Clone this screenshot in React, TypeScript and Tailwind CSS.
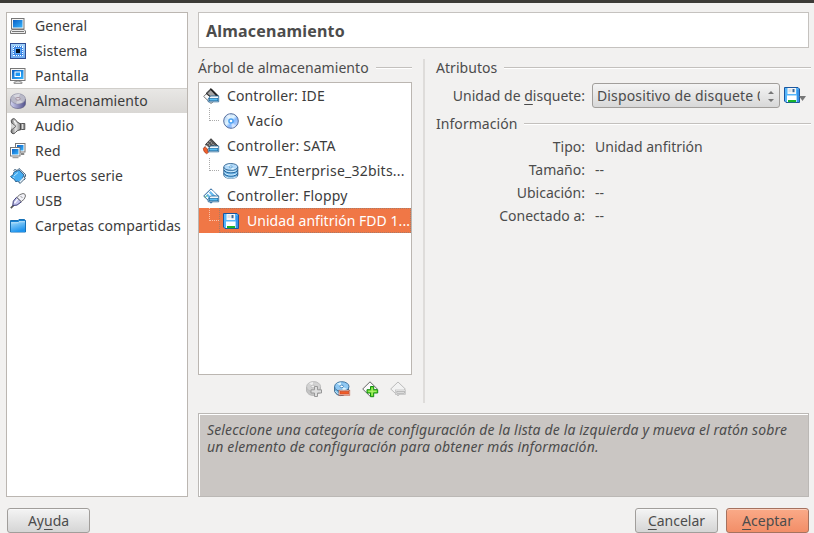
import React from "react";

type IconProps = { className?: string };

const Svg = ({ children, className = "" }: { children: React.ReactNode; className?: string }) => (
  <svg viewBox="0 0 16 16" className={`h-4 w-4 shrink-0 overflow-visible ${className}`}>{children}</svg>
);

const Gradients = () => (
  <svg className="absolute h-0 w-0">
    <defs>
      <linearGradient id="blue" x1="0" y1="0" x2="1" y2="1"><stop stopColor="#0a5fc4" /><stop offset="1" stopColor="#35b4ff" /></linearGradient>
      <linearGradient id="chip" x1="0" y1="0" x2="0" y2="1"><stop stopColor="#a3d3fb" /><stop offset="1" stopColor="#6aa7ee" /></linearGradient>
      <linearGradient id="folder" x1="0" y1="0" x2="0.4" y2="1"><stop stopColor="#a4dcfa" /><stop offset="1" stopColor="#1e94ee" /></linearGradient>
      <linearGradient id="metal" x1="0" y1="0" x2="1" y2="0"><stop stopColor="#d4d6f2" /><stop offset=".4" stopColor="#9c9cc8" /><stop offset="1" stopColor="#52528c" /></linearGradient>
      <linearGradient id="gray" x1="0" y1="0" x2="1" y2="0"><stop stopColor="#6e6e6e" /><stop offset=".5" stopColor="#e4e4e4" /><stop offset="1" stopColor="#8a8a8a" /></linearGradient>
      <linearGradient id="cd" x1="0" y1="0" x2="1" y2="1"><stop stopColor="#a9c8f2" /><stop offset="0.45" stopColor="#e2f6ff" /><stop offset="0.6" stopColor="#86b9ff" /><stop offset="1" stopColor="#d9e4fa" /></linearGradient>
    </defs>
  </svg>
);

const GeneralIcon = () => <Svg>
  <rect x="1.5" y="0.5" width="12.5" height="10.5" fill="#f4f4f4" stroke="#777" />
  <rect x="3" y="2" width="9.5" height="7.5" fill="url(#blue)" />
  <path d="M2 11.5h12l1.5 1.5v2.5H.5V13z" fill="#ececec" stroke="#777" /><path d="M2 13.5h12" stroke="#777" />
</Svg>;
const SystemIcon = () => <Svg>
  <rect x=".5" y=".5" width="15" height="15" fill="url(#chip)" stroke="#2c4c94" />
  <rect x="3" y="3" width="10" height="10" fill="#3c86e6" />
  <path d="M4 3.5h9M4 12.5h9M3.5 4v9M12.5 4v9" stroke="#fff" strokeDasharray="1 1" />
  <rect x="5" y="5" width="6" height="6" fill="#5ba6f4" /><rect x="6" y="6" width="4" height="4" fill="#07101e" />
</Svg>;
const DisplayIcon = () => <Svg>
  <rect x=".5" y=".5" width="14.5" height="12" fill="#f7f7f7" stroke="#777" />
  <rect x="2" y="2" width="11.5" height="9" fill="url(#blue)" />
  <rect x="5" y="4" width="5.5" height="4.5" fill="#1996f5" stroke="#fff" />
  <path d="M6 13h4v1h2v1.5H4V14h2z" fill="#ddd" stroke="#777" strokeWidth=".7" />
</Svg>;
const DiskIcon = () => <Svg>
  <path d="M.5 6v4.5c0 3 3.4 5 7.5 5s7.5-2 7.5-5V6" fill="url(#metal)" stroke="#5a5a7c" strokeWidth=".6" />
  <ellipse cx="8" cy="5.8" rx="7.4" ry="5.1" fill="#b9b9c8" stroke="#85859c" strokeWidth=".6" />
  <path d="M8 6L3 2.8Q6 .5 10 1z" fill="#d6d6de" /><path d="M8 6l5 3q-3 2-7 1.6z" fill="#d2d2da" />
  <ellipse cx="8" cy="5.8" rx="2.2" ry="1.4" fill="#dcd6de" stroke="#96808f" strokeWidth=".7" />
</Svg>;
const AudioIcon = () => <Svg>
  <path d="M9.5 5.8l2-.3h3.3v6h-3.5l-1.8.5z" fill="#9a9a9a" stroke="#4a4a4a" strokeWidth=".9" />
  <path d="M2 1.3q2-1.6 3.5.3.6 2.4 5 4.3v5.6q-4 1-5 3-1.5 2-3.5.8-1.5-1.2-.7-3Q3.5 8 1.4 4q-.5-2 .6-2.7z" fill="url(#gray)" stroke="#444" strokeWidth=".9" />
  <path d="M1.2 4.5L6 8.3 1.4 12" fill="#d7d7d7" stroke="#555" strokeWidth=".8" />
  <path d="M4 2.5q.5 2 2.5 3.5" stroke="#fff" fill="none" /><path d="M12.5 6v5" stroke="#ddd" />
</Svg>;
const NetworkIcon = () => <Svg>
  <rect x="5.5" y=".5" width="9.5" height="8.5" fill="#fff" stroke="#777" /><rect x="7" y="2" width="6.5" height="5.5" fill="url(#blue)" />
  <path d="M11 10.5h3v1h-3" stroke="#888" fill="none" />
  <rect x=".5" y="4.5" width="9.5" height="8.5" fill="#fff" stroke="#777" /><rect x="2" y="6" width="6.5" height="5.5" fill="url(#blue)" />
  <path d="M2.5 14.7h6" stroke="#888" fill="none" />
</Svg>;
const SerialIcon = () => <Svg>
  <path d="M3.5 2.5l1.5-1 2 1 2-2 6.5 6v2L14 9l1 2-1 1" fill="#d9eafb" stroke="#31526e" strokeWidth=".9" />
  <path d="M.5 8.5L3 7l1-3 3-1 2-1 5 5-1 2-1 3-3 2-2-1-1 1-2-3-2-1z" fill="#45adf2" stroke="#285d8b" strokeWidth=".9" />
  <path d="M4 8l4-3.5M3 9l1.5 1" stroke="#b1e5ff" /><path d="M9 14l1 1.5 5-5-.8-2" fill="#e8f3fc" stroke="#36566e" strokeWidth=".9" />
</Svg>;
const UsbIcon = () => <Svg>
  <path d="M.8 15.2l3-3" stroke="#555" strokeWidth="1.7" />
  <path d="M2.8 12.5Q2 8 6.5 4.3l5 4.4Q7 13.5 2.8 12.5z" fill="#c4c4ed" stroke="#3e3e77" />
  <path d="M7 4.5q2-3.5 6-4 2.5 0 2.5 2.5-.5 3.5-4.2 5.6z" fill="#f2f2f8" stroke="#777" /><path d="M10.5 3l2 2" stroke="#999" /><path d="M4.5 10.2l3.2-4" stroke="#fff" strokeWidth="1.2" />
</Svg>;
const FolderIcon = () => <Svg>
  <path d="M.5 2.5H8l1-1h5.5l1 1v11.5H.5z" fill="#1683d4" stroke="#1871b5" /><path d="M1 4.5h7l1-1h6V14H1z" fill="url(#folder)" /><path d="M1 4.7h7l1-1h6" stroke="#d8f2ff" strokeWidth=".8" fill="none" />
</Svg>;
const CdIcon = () => <Svg>
  <circle cx="8" cy="8" r="7.3" fill="url(#cd)" stroke="#536c9c" /><path d="M8 8L3 3l4-2zM8 8l5 5-4 2z" fill="#fff" opacity=".5" />
  <circle cx="8" cy="8" r="2.8" fill="#4aa0f0" /><circle cx="8" cy="8" r="1.3" fill="#fff" />
</Svg>;
const DatabaseIcon = () => <Svg>
  <path d="M.8 4v8c0 4.6 14 4.6 14 0V4" fill="#72b9ea" stroke="#2b5a85" strokeWidth=".9" />
  <path d="M1 7c1 3.8 12.7 3.8 13.7 0M1 10.3c1 3.8 12.7 3.8 13.7 0" fill="none" stroke="#235f95" />
  <path d="M1.6 6.2c1 3 10 3.4 12 .8M1.6 9.5c1 3 10 3.4 12 .8M1.6 12.6c1 3 10 3.4 12 .8" fill="none" stroke="#d8f1ff" />
  <ellipse cx="7.8" cy="3.9" rx="7" ry="3.4" fill="#b2dafa" stroke="#356591" strokeWidth=".9" /><path d="M7.8 4L3 2.3l4-1zM8 4l4.5 2-4 .8z" fill="#e4f6ff" /><ellipse cx="7.8" cy="3.9" rx="1.7" ry=".9" fill="#fff" stroke="#3b8cc9" strokeWidth=".7" />
</Svg>;
const ControllerIcon = ({ kind }: { kind: "ide" | "sata" | "floppy" }) => <Svg>
  {kind === "ide" && <>
    <path d="M.7 8.5L4 5l7.5 7.5L8 15.5z" fill="#fbfbfb" stroke="#555" strokeWidth=".8" />
    <path d="M3 5.5L8 .6l7.2 7.2-4 4.2z" fill="#4d4d4d" stroke="#222" strokeWidth=".8" />
    <path d="M4.6 5.4L8 2l4.5 5.5-3 2z" fill="#a5a5a5" /><path d="M7.5 1l7 7" stroke="#222" strokeWidth="1.4" />
  </>}
  {kind === "sata" && <>
    <path d="M2.5 6.5L8 .7l7 7.3-4 4z" fill="#555" stroke="#222" strokeWidth=".8" />
    <path d="M4.5 5l6 6M6.5 3l6 6" stroke="#bbb" strokeWidth="1.1" strokeDasharray="1.2 1" />
    <path d="M1 9.5L3.5 7 9 12l-3 1z" fill="#fff" stroke="#555" strokeWidth=".7" />
    <path d="M.2 10.5l2-1.5 2.6 2.3.7 3-1.8 1.5Q.6 14.5.2 10.5z" fill="#f0602c" stroke="#9c3415" strokeWidth=".6" />
  </>}
  {kind === "floppy" && <>
    <path d="M.7 8L8 .8 15.3 8 8 15.2z" fill="#f7fcff" stroke="#22609a" />
    <path d="M3 7.5L7.5 3l6 5.5-3.5 1-2 2.5z" fill="#6bbcf0" /><path d="M5.2 5l3.5 3.8M9 3l3 3.3" stroke="#fff" strokeWidth="1.5" /><path d="M2 9.5l2-2" stroke="#3bb04c" />
  </>}
  <path d="M5.2 11l2.3-3h8.2v5.8H5.2z" fill="#fff" stroke="#1a5f94" strokeWidth=".8" /><rect x="6.6" y="10.3" width="8.2" height="2.4" fill="#58c1f6" stroke="#1769a1" strokeWidth=".7" />
</Svg>;
const FloppyIcon = ({ className = "" }: IconProps) => <Svg className={className}>
  <path d="M.5.5H14l1.5 1.5v13.5H2L.5 14z" fill="#56b6fb" stroke="#1c579e" />
  <path d="M14 2.5V15" stroke="#1970d8" /><rect x="3.5" y="1" width="8.5" height="6" fill="#f7f7f7" /><rect x="4.5" y="2" width="3" height="3" fill="#dfe3e6" /><rect x="8.5" y="2" width="2" height="3.2" fill="#3e6996" />
  <rect x="3" y="8.5" width="9.5" height="6.5" fill="#fff" /><rect x="4" y="13" width="8" height="2.2" fill="#18b32b" />
</Svg>;
const AddDisk = () => <Svg>
  <path d="M.5 6v4q1.5 4.8 8 4.5l6-3V6" fill="#c4c4c4" stroke="#b0b0b0" strokeWidth=".8" /><ellipse cx="7.6" cy="5.7" rx="7" ry="5.1" fill="#d2d2d2" stroke="#b4b4b4" strokeWidth=".8" /><path d="M7 5.5L3 2l4-1z" fill="#eee" /><ellipse cx="7" cy="5.5" rx="2" ry="1.4" fill="#f0f0f0" stroke="#bbb" />
  <path d="M8.5 5.5h3v3.3h4v3.2h-4v3.5h-3V12h-3.5V8.8h3.5z" fill="#dedede" stroke="#989898" />
</Svg>;
const RemoveDisk = () => <Svg>
  <path d="M.6 5.5v5Q3 15.5 9 14.4l5.5-3V5.5" fill="#75bae5" stroke="#315d82" strokeWidth=".9" /><path d="M1.4 10q1.6 3 5 3.3" stroke="#d3eeff" fill="none" /><ellipse cx="7.8" cy="5.6" rx="7.2" ry="4.9" fill="#8fc8f3" stroke="#346b98" strokeWidth=".9" /><path d="M7.5 5.5L2.8 2.4l4-1.2zM8.2 5.5l5 2.6-4.4 1.6z" fill="#d8f3ff" /><ellipse cx="7.7" cy="5.4" rx="1.8" ry="1.3" fill="#fff" stroke="#478ac1" />
  <rect x="5" y="9.2" width="10.8" height="5" fill="#fff" stroke="#b64322" strokeWidth=".6" /><rect x="6" y="10.3" width="8.8" height="2.8" fill="#f15c28" stroke="#c1401c" strokeWidth=".6" />
</Svg>;
const AddController = () => <Svg><path d="M.7 8L8 .8 15.3 8 8 15.2z" fill="#fafafa" stroke="#666" /><path d="M8.5 5.5h3.2v3.2h4V12h-4v3.7H8.5V12H5V8.7h3.5z" fill="#6fdc2c" stroke="#138d14" /><path d="M10.1 7v7.4M6.4 10.3h8" stroke="#b5f277" /></Svg>;
const RemoveController = () => <Svg><path d="M.7 8L8 1l7.3 7L8 14.8z" fill="#f2f2f2" stroke="#bcbcbc" /><rect x="5.5" y="9" width="10" height="4.5" fill="#f6f6f6" stroke="#bbb" strokeWidth=".7" /><rect x="6.8" y="10.3" width="7.6" height="2" fill="#dedede" stroke="#a5a5a5" strokeWidth=".7" /></Svg>;

const sections: [string, React.FC, string][] = [
  ["General", GeneralIcon, "tracking-[0.08px]"],
  ["Sistema", SystemIcon, "tracking-[0.08px]"],
  ["Pantalla", DisplayIcon, "tracking-[0.14px]"],
  ["Almacenamiento", DiskIcon, "tracking-[0.1px]"],
  ["Audio", AudioIcon, "tracking-[0.2px]"],
  ["Red", NetworkIcon, "tracking-[0.2px]"],
  ["Puertos serie", SerialIcon, "tracking-[0.12px]"],
  ["USB", UsbIcon, "tracking-[0px]"],
  ["Carpetas compartidas", FolderIcon, "tracking-[0.06px]"],
];

const Heading = ({ children }: { children: React.ReactNode }) => (
  <div className="flex h-5 items-center gap-[7px]"><span className="tracking-[0.05px]">{children}</span><i className="h-[2px] flex-1 border-t border-[#c3c0bd] bg-white" /></div>
);

type TreeRowProps = { icon: React.ReactNode; text: string; tracking: string; child?: boolean; selected?: boolean };
const TreeRow = ({ icon, text, tracking, child, selected }: TreeRowProps) => (
  <div className={`flex h-[25px] items-center ${selected ? "bg-[#f07746] text-white" : ""}`}>
    {child && <i className={`mb-[12px] ml-[10px] h-[13px] w-[10px] shrink-0 border-b border-l border-dotted ${selected ? "border-[#f9c4ad]" : "border-[#aaa]"}`} />}
    <div className={`flex h-[25px] min-w-0 flex-1 items-center gap-2 pl-[4px] ${selected ? "outline outline-1 -outline-offset-1 outline-dotted outline-[#a77b68]" : ""}`}>{icon}<span className={tracking}>{text}</span></div>
  </div>
);

const Button = ({ children, primary }: { children: React.ReactNode; primary?: boolean }) => (
  <button className={`h-[25px] w-[83px] rounded-[3px] border pt-px shadow-[inset_0_1px_0_#ffffff70] ${primary ? "border-[#a5725f] bg-linear-to-b from-[#faaa88] to-[#f28e68]" : "border-[#a19e9b] bg-linear-to-b from-[#f4f4f4] to-[#d5d5d5]"}`}>{children}</button>
);
const Key = ({ children }: { children: React.ReactNode }) => <span className="underline decoration-1 underline-offset-[3px]">{children}</span>;

const details = [["Tipo:", "Unidad anfitrión"], ["Tamaño:", "--"], ["Ubicación:", "--"], ["Conectado a:", "--"]];

export default function App() {
  return (
    <div className="flex h-[533px] w-[814px] flex-col overflow-hidden bg-[#f2f1f0] font-['Noto_Sans',sans-serif] text-[14px] leading-5 whitespace-nowrap text-[#4c4c4c]">
      <Gradients />
      <div className="h-[3px] shrink-0 bg-[#3c3b37]" />
      <div className="mt-[9px] flex h-[485px] shrink-0 pr-[5px] pl-[6px]">
        <nav className="w-[182px] shrink-0 border border-[#bbb6b1] bg-white text-[#3c3c3c]">
          {sections.map(([name, Icon, tracking], i) => (
            <div key={name} className={`flex h-[25px] items-center gap-[9px] pl-[3px] ${i === 3 ? "bg-linear-to-b from-[#e9e8e6] to-[#d9d7d4] shadow-[inset_0_1px_#d0ceca]" : ""}`}><Icon /><span className={tracking}>{name}</span></div>
          ))}
        </nav>
        <main className="ml-[10px] flex w-[611px] flex-col">
          <h1 className="flex h-9 shrink-0 items-center border border-[#c5c2bf] bg-white px-[7px] pt-px text-[16px] font-bold tracking-[0.2px]">Almacenamiento</h1>
          <div className="mt-[10px] flex h-[345px] shrink-0">
            <section className="w-[214px] shrink-0">
              <Heading>Árbol de almacenamiento</Heading>
              <div className="mt-[4px] h-[293px] border border-[#bbb6b1] bg-white text-[#3c3c3c]">
                <TreeRow icon={<ControllerIcon kind="ide" />} text="Controller: IDE" tracking="tracking-[0.12px]" />
                <TreeRow child icon={<CdIcon />} text="Vacío" tracking="tracking-[0.3px]" />
                <TreeRow icon={<ControllerIcon kind="sata" />} text="Controller: SATA" tracking="tracking-[0.25px]" />
                <TreeRow child icon={<DatabaseIcon />} text="W7_Enterprise_32bits..." tracking="tracking-[0.23px]" />
                <TreeRow icon={<ControllerIcon kind="floppy" />} text="Controller: Floppy" tracking="tracking-[0.22px]" />
                <TreeRow child selected icon={<FloppyIcon />} text="Unidad anfitrión FDD 1..." tracking="tracking-[0.04px]" />
              </div>
              <div className="mt-[6px] flex gap-3 pl-[108px]"><AddDisk /><RemoveDisk /><AddController /><RemoveController /></div>
            </section>
            <i className="mt-px ml-[11px] h-[344px] w-[2px] shrink-0 bg-[#dedcda]" />
            <section className="ml-[11px] w-[375px] shrink-0">
              <Heading>Atributos</Heading>
              <div className="mt-[5px] flex h-[25px] items-center">
                <span className="w-[149px] text-right">Unidad de <Key>d</Key>isquete:</span>
                <div className="ml-[7px] flex h-[25px] w-[188px] shrink-0 items-center rounded-[3px] border border-[#a19e9b] bg-linear-to-b from-[#f4f4f4] to-[#d8d8d8] pl-[4px]">
                  <span className="w-[163px] overflow-hidden tracking-[0.14px]">Dispositivo de disquete 0</span>
                  <svg viewBox="0 0 8 14" className="ml-[7px] h-[14px] w-2"><path d="M1 5l3-3 3 3zM1 10h6l-3 3z" fill="#777" /></svg>
                </div>
                <div className="ml-[4px] flex items-center pb-[2px]"><FloppyIcon /><svg viewBox="0 0 7 6" className="-ml-px mt-2 h-[6px] w-[7px]"><path d="M0 0h7L3.5 5z" fill="#777" /></svg></div>
              </div>
              <div className="mt-[6px]"><Heading>Información</Heading></div>
              <dl className="mt-px grid grid-cols-[149px_1fr] gap-x-[10px] leading-[23px]">
                {details.map(([k, v]) => <React.Fragment key={k}><dt className="text-right">{k}</dt><dd>{v}</dd></React.Fragment>)}
              </dl>
            </section>
          </div>
          <p className="mt-[10px] h-[84px] shrink-0 border border-[#bbb8b5] bg-[#cac6c3] px-[8px] pt-[7px] leading-[17px] tracking-[0.145px] italic shadow-[inset_1px_1px_#fff]">
            Seleccione una categoría de configuración de la lista de la izquierda y mueva el ratón sobre<br />un elemento de configuración para obtener más información.
          </p>
        </main>
      </div>
      <footer className="mt-[11px] flex h-[25px] shrink-0 pr-[5px] pl-[7px]">
        <Button>Ay<Key>u</Key>da</Button>
        <div className="ml-auto flex gap-2"><Button><Key>C</Key>ancelar</Button><Button primary><Key>A</Key>ceptar</Button></div>
      </footer>
    </div>
  );
}
